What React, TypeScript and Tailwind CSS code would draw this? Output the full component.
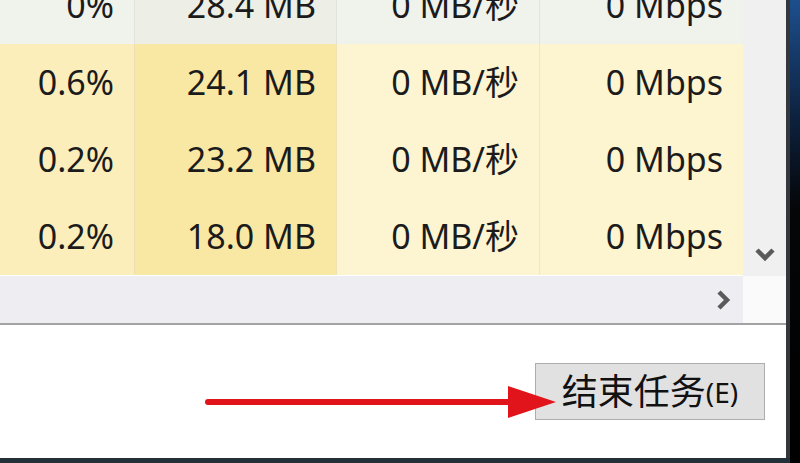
import React from "react";

const rows = [
  { cpu: "0%", mem: "28.4 MB", disk: "0 MB/秒", net: "0 Mbps", top: true },
  { cpu: "0.6%", mem: "24.1 MB", disk: "0 MB/秒", net: "0 Mbps", top: false },
  { cpu: "0.2%", mem: "23.2 MB", disk: "0 MB/秒", net: "0 Mbps", top: false },
  { cpu: "0.2%", mem: "18.0 MB", disk: "0 MB/秒", net: "0 Mbps", top: false },
];

const font = "font-['Noto_Sans','Noto_Sans_CJK_SC',sans-serif]";

export default function App() {
  return (
    <div className="relative flex h-[463px] w-[800px] overflow-hidden bg-[linear-gradient(180deg,#1d4f8e_0%,#0d2240_25%,#050608_45%,#000000_100%)]">
      <div className="flex h-[463px] w-[790px] flex-col">
        <div className={`flex h-[458px] w-[790px] flex-col border-r-[4px] border-[#34383c] bg-white ${font}`}>
          {/* list */}
          <div className="flex h-[276px]">
            <div className="w-[743px] overflow-hidden">
              <div className="-mt-[33px]">
                {rows.map((r, i) => (
                  <div
                    key={i}
                    className={`grid h-[77px] grid-cols-[135px_202px_203px_203px] text-[34px] text-[#1b1b1b] ${
                      r.top ? "bg-[#f0f2ec]" : ""
                    }`}
                  >
                    <div className={`flex items-center justify-end border-r pr-[20px] ${r.top ? "border-[#e2e4dc]" : "border-[#eadfb4] bg-[#fbeebb]"}`}>
                      {r.cpu}
                    </div>
                    <div className={`flex items-center justify-end border-r pr-[20px] ${r.top ? "border-[#e2e4dc] bg-[#edefe6]" : "border-[#efe3b6] bg-[#f9e8a3]"}`}>
                      {r.mem}
                    </div>
                    <div className={`flex items-center justify-end border-r pr-[20px] ${r.top ? "border-[#e2e4dc]" : "border-[#f1e7c4] bg-[#fdf4d2]"}`}>
                      {r.disk}
                    </div>
                    <div className={`flex items-center justify-end pr-[20px] ${r.top ? "" : "bg-[#fdf4d0]"}`}>
                      {r.net}
                    </div>
                  </div>
                ))}
              </div>
            </div>
            <div className="flex w-[43px] flex-col items-center justify-end bg-[#f0f0f0] pb-[13px]">
              <svg width="22" height="16" viewBox="0 0 22 16">
                <path d="M3 3 L11 11 L19 3" fill="none" stroke="#5a5a5a" strokeWidth="4.5" />
              </svg>
            </div>
          </div>
          {/* horizontal scrollbar */}
          <div className="flex h-[47px]">
            <div className="flex w-[743px] items-center justify-end bg-[#eeeef2] pr-[11px]">
              <svg width="16" height="22" viewBox="0 0 16 22">
                <path d="M3 3 L11 11 L3 19" fill="none" stroke="#5a5a5a" strokeWidth="4.5" />
              </svg>
            </div>
            <div className="w-[43px] bg-[#fafafa]" />
          </div>
          <div className="h-[2px] bg-[#a3a3a3]" />
          {/* footer */}
          <div className="flex flex-1 items-start justify-end pr-[21px] pt-[38px]">
            <button className="flex h-[57px] w-[230px] items-center justify-center border border-[#adadad] bg-[#e1e1e1] text-[#111]">
              <span className="text-[36px] leading-none">结束任务</span>
              <span className="text-[28px] leading-none">(E)</span>
            </button>
          </div>
        </div>
        <div className="h-[5px] w-[790px] bg-[#243038]" />
      </div>

      {/* red arrow */}
      <svg className="absolute left-[204px] top-[384px]" width="356" height="36" viewBox="0 0 356 36">
        <line x1="4" y1="18" x2="320" y2="18" stroke="#e0141a" strokeWidth="6" strokeLinecap="round" />
        <polygon points="304,2 352,18 304,34" fill="#e0141a" />
      </svg>
    </div>
  );
}
